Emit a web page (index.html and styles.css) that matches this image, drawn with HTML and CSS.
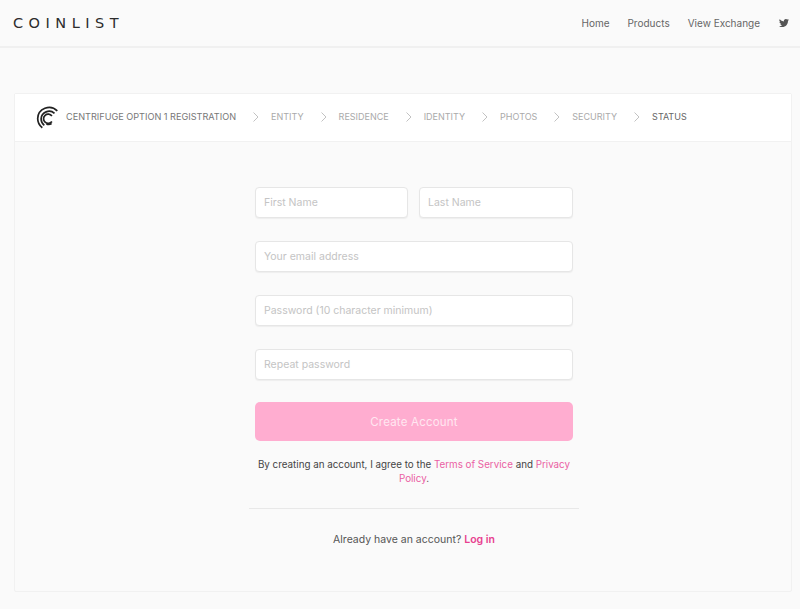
FILE: index.html
```html
<!DOCTYPE html>
<html lang="en">
<head>
<meta charset="utf-8">
<title>CoinList</title>
<link rel="stylesheet" href="styles.css">
</head>
<body>
<header class="topbar">
  <a class="brand">COINLIST</a>
  <nav class="topnav">
    <a>Home</a>
    <a>Products</a>
    <a>View Exchange</a>
    <svg class="twitter" viewBox="0 0 24 24" width="10" height="10"><path d="M23.95 4.57a10 10 0 0 1-2.83.78 4.96 4.96 0 0 0 2.17-2.73 9.9 9.9 0 0 1-3.13 1.19 4.92 4.92 0 0 0-8.39 4.49A14 14 0 0 1 1.64 3.16a4.92 4.92 0 0 0 1.52 6.57 4.9 4.9 0 0 1-2.23-.62v.06a4.92 4.92 0 0 0 3.95 4.83 5 5 0 0 1-2.21.08 4.94 4.94 0 0 0 4.6 3.42A9.87 9.87 0 0 1 0 19.54a14 14 0 0 0 7.56 2.21c9.05 0 14-7.5 14-13.98 0-.21 0-.42-.02-.63a10 10 0 0 0 2.41-2.57z"/></svg>
  </nav>
</header>
<main class="card">
  <div class="steps">
    <svg class="logo" viewBox="0 0 24 24" width="24" height="24" fill="none" stroke="#222" stroke-width="1.7">
      <path d="M15.9 10a4.6 4.6 0 1 0 0 5.4"/>
      <path d="M18.5 7.4a8 8 0 0 0-13.4 5.3c0 2.9 1.4 5.2 3.2 6.6"/>
      <path d="M21.3 4.9A11.4 11.4 0 0 0 1.7 12.6c0 3.8 1.9 7.2 4.6 9.2"/>
      <path d="M15.6 17.6a6 6 0 0 1-5.2.3"/>
    </svg>
    <span class="step-title">CENTRIFUGE OPTION 1 REGISTRATION</span>
    <svg class="chev" viewBox="0 0 6 10" width="6" height="10"><path d="M.5.5 5 5 .5 9.5"/></svg>
    <span class="step">ENTITY</span>
    <svg class="chev" viewBox="0 0 6 10" width="6" height="10"><path d="M.5.5 5 5 .5 9.5"/></svg>
    <span class="step">RESIDENCE</span>
    <svg class="chev" viewBox="0 0 6 10" width="6" height="10"><path d="M.5.5 5 5 .5 9.5"/></svg>
    <span class="step">IDENTITY</span>
    <svg class="chev" viewBox="0 0 6 10" width="6" height="10"><path d="M.5.5 5 5 .5 9.5"/></svg>
    <span class="step">PHOTOS</span>
    <svg class="chev" viewBox="0 0 6 10" width="6" height="10"><path d="M.5.5 5 5 .5 9.5"/></svg>
    <span class="step">SECURITY</span>
    <svg class="chev" viewBox="0 0 6 10" width="6" height="10"><path d="M.5.5 5 5 .5 9.5"/></svg>
    <span class="step current">STATUS</span>
  </div>
  <form class="form">
    <div class="row">
      <input class="field" placeholder="First Name">
      <input class="field" placeholder="Last Name">
    </div>
    <input class="field" placeholder="Your email address">
    <input class="field" placeholder="Password (10 character minimum)">
    <input class="field" placeholder="Repeat password">
    <button class="submit" type="button">Create Account</button>
    <p class="terms">By creating an account, I agree to the <a>Terms of Service</a> and <a>Privacy Policy</a>.</p>
    <hr class="rule">
    <p class="login">Already have an account? <a>Log in</a></p>
  </form>
</main>
</body>
</html>
```
FILE: styles.css
```css
* { box-sizing: border-box; }
html, body { margin: 0; height: 100%; }
body {
  background: #fafafa;
  font-family: "Inter", "Liberation Sans", sans-serif;
  color: #555;
  overflow: hidden;
}
.topbar {
  height: 48px;
  display: flex;
  align-items: center;
  justify-content: space-between;
  padding: 0 11px 0 13px;
  border-bottom: 2px solid #f0f0f0;
}
.brand {
  font-family: "DejaVu Sans", sans-serif;
  font-size: 14.5px;
  letter-spacing: 5.5px;
  color: #2c2c2c;
}
.topnav {
  display: flex;
  align-items: center;
  gap: 18px;
  font-size: 10px;
  color: #666;
}
.twitter { fill: #555; margin-left: 1px; }
.card {
  margin: 45px 8px 0 14px;
  height: 499px;
  border: 1px solid #f1f1f1;
  border-radius: 2px;
}
.steps {
  height: 48px;
  background: #fff;
  border-bottom: 1px solid #f1f1f1;
  display: flex;
  align-items: center;
  padding-left: 21px;
  font-size: 9.15px;
  color: #aaa;
}
.logo { margin-right: 6px; }
.step-title { color: #777; margin-bottom: 3px; }
.chev {
  fill: none;
  stroke: #bbb;
  stroke-width: .9;
  margin: 0 12px 0 17px;
  position: relative;
  top: -1px;
}
.step { color: #aaa; margin-bottom: 3px; font-size: 9px; }
.step.current { color: #666; }
.form {
  width: 318px;
  margin: 45px 0 0 240px;
  display: flex;
  flex-direction: column;
  gap: 23px;
}
.row { display: grid; grid-template-columns: 153px 154px; gap: 11px; }
.field {
  height: 31px;
  width: 100%;
  background: #fff;
  border: 1px solid #e6e6e6;
  border-radius: 4px;
  box-shadow: 0 1px 1px #eee;
  padding: 0 8px;
  font: 10.5px "Inter", "Liberation Sans", sans-serif;
  color: #555;
  outline: none;
}
.field::placeholder { color: #c4c4c4; opacity: 1; }
.submit {
  height: 39px;
  margin-top: -1px;
  background: #ffadd0;
  color: #ffe7f1;
  border: 0;
  border-radius: 5px;
  font: 11.5px "Inter", "Liberation Sans", sans-serif;
  letter-spacing: .2px;
}
.terms {
  margin: -6.5px -4px 0;
  font-size: 9.8px;
  line-height: 14.5px;
  text-align: center;
  color: #444;
}
.terms a { color: #ea5fa3; }
.rule {
  width: 330px;
  margin: -2px 0 0 -6px;
  border: 0;
  border-top: 1px solid #e8e8e8;
}
.login {
  margin: 1px 0 0;
  font-size: 10.5px;
  text-align: center;
  color: #555;
}
.login a { color: #e8408f; font-weight: 600; }
```
